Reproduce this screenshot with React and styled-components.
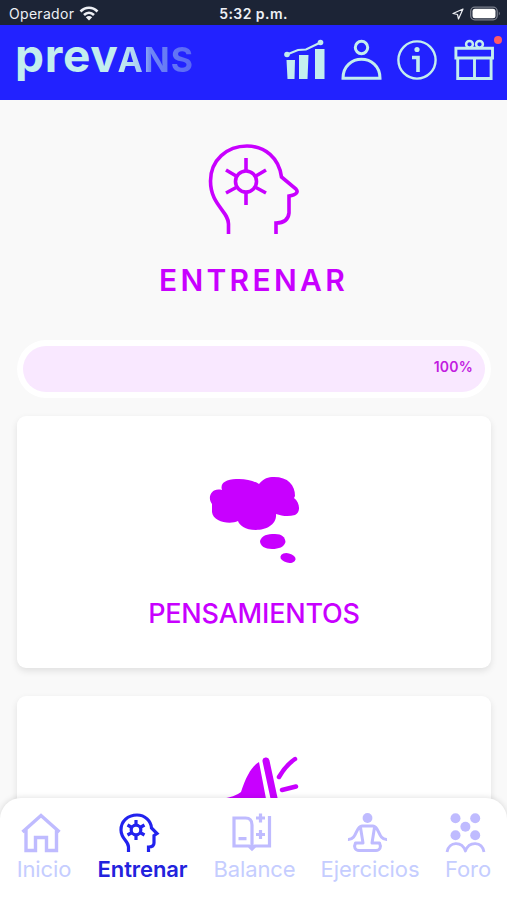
import React from 'react';
import styled, { createGlobalStyle } from 'styled-components';

const Global = createGlobalStyle`
  * { box-sizing: border-box; }
  body { margin: 0; background: #f9f9f9; font-family: Inter, sans-serif; }
`;

const Screen = styled.div`
  position: relative;
  display: flex;
  flex-direction: column;
  width: 507px;
  height: 900px;
  overflow: hidden;
  background: #f9f9f9;
`;

const StatusBar = styled.div`
  display: grid;
  grid-template-columns: 1fr auto 1fr;
  align-items: center;
  flex: none;
  height: 25px;
  padding: 2px 6px 0 9px;
  background: #1c2436;
  color: #eef0f5;
`;

const Carrier = styled.div`
  display: flex;
  align-items: center;
  gap: 5px;
  font-size: 14px;
  line-height: 20px;
  letter-spacing: 0.3px;
`;

const Clock = styled.div`
  margin-right: 3px;
  font-size: 14px;
  font-weight: 600;
  line-height: 20px;
  letter-spacing: 0.45px;
`;

const Indicators = styled.div`
  display: flex;
  justify-content: flex-end;
  align-items: center;
  gap: 6px;
`;

const Header = styled.header`
  display: flex;
  justify-content: space-between;
  flex: none;
  height: 75px;
  padding: 14px 13.5px 0 15px;
  background: #2222ff;
`;

const Logo = styled.div`
  display: flex;
  align-items: baseline;
  height: 48px;
  margin-top: -8px;
  line-height: 48px;
  font-weight: 700;
  font-size: 46px;
  letter-spacing: 0.7px;
  color: #c3eeee;
`;

const LogoTail = styled.span`
  margin-left: -1px;
  font-size: 34px;
  letter-spacing: 0.9px;
  background: linear-gradient(90deg, #c3eeee 0%, #a9cbf3 30%, #7088f5 42%, #667af5 65%, #5865f5 100%);
  background-clip: text;
  color: transparent;
`;

const Tools = styled.nav`
  display: flex;
  gap: 16.5px;
  color: #c3eeee;
`;

const ToolButton = styled.button`
  position: relative;
  width: 40px;
  height: 42px;
  padding: 0;
  border: 0;
  background: none;
  color: inherit;
`;

const Dot = styled.span`
  position: absolute;
  top: -3px;
  right: -8px;
  width: 8px;
  height: 8px;
  border-radius: 50%;
  background: #ff5a66;
`;

const Main = styled.main`
  display: flex;
  flex-direction: column;
  align-items: center;
  flex: 1;
  min-height: 0;
  padding: 44px 16px 0 17px;
  color: #c800ff;
`;

const Title = styled.h1`
  margin: 25px 3px 0 0;
  padding-left: 2px;
  font-size: 30px;
  font-weight: 600;
  line-height: 40px;
  letter-spacing: 3.3px;
`;

const Progress = styled.div`
  flex: none;
  width: 100%;
  height: 58px;
  margin-top: 40px;
  padding: 6px;
  border-radius: 29px;
  background: #fff;
`;

const ProgressFill = styled.div`
  display: flex;
  justify-content: flex-end;
  height: 46px;
  padding: 11px 12px 0 0;
  border-radius: 23px;
  background: #f9e8ff;
  color: #c21ce0;
  font-size: 14px;
  font-weight: 600;
  line-height: 20px;
  letter-spacing: 0.2px;
`;

const Card = styled.section`
  display: flex;
  flex-direction: column;
  align-items: center;
  flex: none;
  width: 100%;
  height: 252px;
  margin-top: ${(p) => p.$gap}px;
  padding-top: 58px;
  border-radius: 9px;
  background: #fff;
  box-shadow: 0 3px 7px rgba(0, 0, 0, 0.1);
`;

const CardTitle = styled.h2`
  margin: 29px 0 0;
  font-size: 27px;
  font-weight: 450;
  line-height: 40px;
  letter-spacing: -0.2px;
`;

const TabBar = styled.nav`
  position: absolute;
  left: 0;
  right: 0;
  bottom: 0;
  display: flex;
  gap: 26px;
  height: 102px;
  padding: 15px 0 0 17px;
  border-radius: 21px 21px 0 0;
  background: #fff;
  box-shadow: 0 0 6px rgba(0, 0, 0, 0.14);
`;

const Tab = styled.a`
  display: flex;
  flex-direction: column;
  align-items: center;
  flex: none;
  width: ${(p) => p.$width}px;
  color: ${(p) => (p.$active ? '#2222ee' : '#bfbbff')};

  > svg { margin-right: 7px; }
`;

const TabLabel = styled.span`
  margin-top: 1px;
  font-size: 22px;
  line-height: 30px;
  white-space: nowrap;
  font-weight: ${(p) => (p.$active ? 600 : 400)};
  letter-spacing: -0.1px;
  color: ${(p) => (p.$active ? '#2222dd' : '#c5cdff')};
`;

const Icon = styled.svg`
  display: block;
  flex: none;
  overflow: visible;
  fill: none;
  stroke: currentColor;
`;

function Head() {
  return (
    <Icon width="92" height="91" viewBox="0 0 92 91" strokeWidth="3.6">
      <path d="M20.500 90V80C20.500 67 2.500 61 2.500 37C2.500 16 19 2 39 2C57 2 71 14 73.500 33L88 45Q92 50 81 52V69Q80 79 68 79V90" />
      <circle cx="38" cy="37.500" r="10.500" />
      <path d="M38 27V14M38 48V61M47 32.500L58 26M47 43L58 49M29 32.500L18 26M29 43L18 49" />
    </Icon>
  );
}

function Chart() {
  return (
    <Icon width="40" height="42" viewBox="0 0 40 42">
      <g fill="currentColor" stroke="none">
        <path d="M2.500 21h8.500l-.5 19h-7zM15 16h9.500l-1 24h-8.500zM31 10h9.500v30h-9.500z" />
        <circle cx="3" cy="15.500" r="2.800" />
        <circle cx="36.500" cy="3.500" r="2.800" />
      </g>
      <path d="M3 15.500L14 11L22 10.500L36.500 3.500" strokeWidth="2" />
    </Icon>
  );
}

function Person() {
  return (
    <Icon width="40" height="42" viewBox="0 0 40 42" strokeWidth="3">
      <circle cx="20.500" cy="8.500" r="6.200" />
      <path d="M2 39.300C2 14 39 14 39 39.300Z" />
    </Icon>
  );
}

function Info() {
  return (
    <Icon width="40" height="42" viewBox="0 0 40 42" strokeWidth="2.400">
      <circle cx="20" cy="21" r="18.600" />
      <circle cx="20" cy="10.500" r="2.600" fill="currentColor" stroke="none" />
      <path d="M15 18.500h6V33" strokeWidth="3.600" />
    </Icon>
  );
}

function Gift() {
  return (
    <Icon width="40" height="42" viewBox="0 0 40 42" strokeWidth="2.900">
      <path d="M1.900 9.300h36.600v9.700H1.900zM3.700 19v20.500h33.400V19M20.500 19v20.500" />
      <circle cx="15.500" cy="5.300" r="3.400" strokeWidth="2.500" />
      <circle cx="25.500" cy="5.300" r="3.400" strokeWidth="2.500" />
    </Icon>
  );
}

function Thought() {
  return (
    <Icon width="92" height="91" viewBox="0 0 92 91">
      <g fill="currentColor" stroke="none">
        <path d="M14 16C11 7 22 5 31 5C39 5 46 7 51 10C56 4 60 3 66 3C80 3 87 11 87 22L86 24C92 28 93 39 87 41C80 43 74 42 68 40C69 51 58 56 48 56C37 56 31 51 30 47C22 51 5 48 4 38L4 30C-1 24 3 13 14 16Z" />
        <path d="M52 67C54 61 59 60 67 60C74 60 77 63 77.500 68C76 73 71 75 64 75C57 75 52 72 52 67Z" />
        <ellipse cx="80" cy="84" rx="7.700" ry="4.700" transform="rotate(12 80 84)" />
      </g>
    </Icon>
  );
}

function Megaphone() {
  return (
    <Icon width="92" height="91" viewBox="0 0 92 91">
      <path d="M13 45Q27 43 33 38C38 22 44 12 51 8L59 50H13Z" fill="currentColor" stroke="none" />
      <path d="M58 7L69 58" strokeWidth="7" strokeLinecap="round" />
      <path d="M71 23Q78 11 87 5M74 36L88 32.500" strokeWidth="4.500" strokeLinecap="round" />
    </Icon>
  );
}

function Home() {
  return (
    <Icon width="40" height="40" viewBox="0 0 40 40" strokeWidth="3.400">
      <path d="M1.500 19L20 2.500L38.500 19M5 16V37.500H14.500V24.500H25.500V37.500H35.500V16" />
    </Icon>
  );
}

function SmallHead() {
  return (
    <Icon width="40" height="40" viewBox="0 0 40 40" strokeWidth="3.200">
      <path d="M9.500 39V34C9.500 28 2 26 2 17C2 8 9 2 18 2C26 2 32 8 32.500 15L38 20.500L35 22.500V30Q35 34 29.500 34V39" />
      <circle cx="17" cy="17" r="4.800" />
      <path d="M17 12V7M17 22V27M21 14.500L25.500 12M21 19.500L25.500 22M13 14.500L8.500 12M13 19.500L8.500 22" />
    </Icon>
  );
}

function Book() {
  return (
    <Icon width="40" height="40" viewBox="0 0 40 40" strokeWidth="3.200">
      <path d="M38.500 3V33H24L21 36L18 33H3V5H14.500Q21 5 21 12V36M7.500 25.700h8M25 5h9M29.500 .5v9M25 21.500h9M29.500 17v9" />
    </Icon>
  );
}

function Yoga() {
  return (
    <Icon width="40" height="40" viewBox="0 0 40 40" strokeWidth="3" strokeLinejoin="round">
      <circle cx="20.500" cy="5" r="4.900" fill="currentColor" stroke="none" />
      <path d="M1 26.500C10 27 8.500 13 15 13H26C32.500 13 31 27 40 26.500M13.500 14.500L16 30H8.500C6.500 34 8 37.500 12 37.500H29C33 37.500 34.500 34 32.500 30H25L27.500 14.500" />
    </Icon>
  );
}

function Group() {
  return (
    <Icon width="40" height="40" viewBox="0 0 40 40" strokeWidth="2.800" strokeLinejoin="round">
      <g fill="currentColor" stroke="none">
        <circle cx="10.500" cy="5.300" r="5" />
        <circle cx="30.200" cy="5.300" r="5" />
        <circle cx="20.400" cy="13.700" r="5" />
        <circle cx="10.500" cy="22.300" r="5" />
        <circle cx="30.200" cy="22.300" r="5" />
      </g>
      <path d="M2 39C4 28 17 28 20.400 38C24 28 37 28 39 39" />
    </Icon>
  );
}

const tools = [Chart, Person, Info, Gift];

const tabs = [
  { label: 'Inicio', width: 54, icon: Home },
  { label: 'Entrenar', width: 91, icon: SmallHead, active: true },
  { label: 'Balance', width: 81, icon: Book },
  { label: 'Ejercicios', width: 98, icon: Yoga },
  { label: 'Foro', width: 46, icon: Group },
];

export default function App() {
  return (
    <Screen>
      <Global />
      <StatusBar>
        <Carrier>
          Operador
          <Icon width="20" height="15" viewBox="0 0 20 15" strokeWidth="2.600">
            <path d="M1.500 5.500C6.500 .5 13.500 .5 18.500 5.500M5 9C8 6 12 6 15 9" />
            <path d="M10 14.500L6.800 11.300Q10 8.800 13.200 11.300Z" fill="currentColor" stroke="none" />
          </Icon>
        </Carrier>
        <Clock>5:32 p.m.</Clock>
        <Indicators>
          <Icon width="12" height="12" viewBox="0 0 12 12" strokeWidth="1.200">
            <path d="M11 1L1 5.500L5.500 6.500L6.500 11Z" strokeLinejoin="round" />
          </Icon>
          <Icon width="31" height="14" viewBox="0 0 31 14">
            <rect x=".7" y=".2" width="26.500" height="12.600" rx="4" stroke="#7a7f8c" strokeWidth="1.300" />
            <rect x="2.500" y="1.800" width="23" height="9.400" rx="2.500" fill="#fff" stroke="none" />
            <path d="M28.800 4.500Q31 6.500 28.800 8.500Z" fill="#7a7f8c" stroke="none" />
          </Icon>
        </Indicators>
      </StatusBar>
      <Header>
        <Logo>
          prev<LogoTail>ANS</LogoTail>
        </Logo>
        <Tools>
          {tools.map((Glyph, i) => (
            <ToolButton key={i}>
              <Glyph />
              {Glyph === Gift && <Dot />}
            </ToolButton>
          ))}
        </Tools>
      </Header>
      <Main>
        <Head />
        <Title>ENTRENAR</Title>
        <Progress>
          <ProgressFill>100%</ProgressFill>
        </Progress>
        <Card $gap={18}>
          <Thought />
          <CardTitle>PENSAMIENTOS</CardTitle>
        </Card>
        <Card $gap={28}>
          <Megaphone />
        </Card>
      </Main>
      <TabBar>
        {tabs.map(({ label, width, icon: Glyph, active }) => (
          <Tab key={label} $width={width} $active={active}>
            <Glyph />
            <TabLabel $active={active}>{label}</TabLabel>
          </Tab>
        ))}
      </TabBar>
    </Screen>
  );
}
